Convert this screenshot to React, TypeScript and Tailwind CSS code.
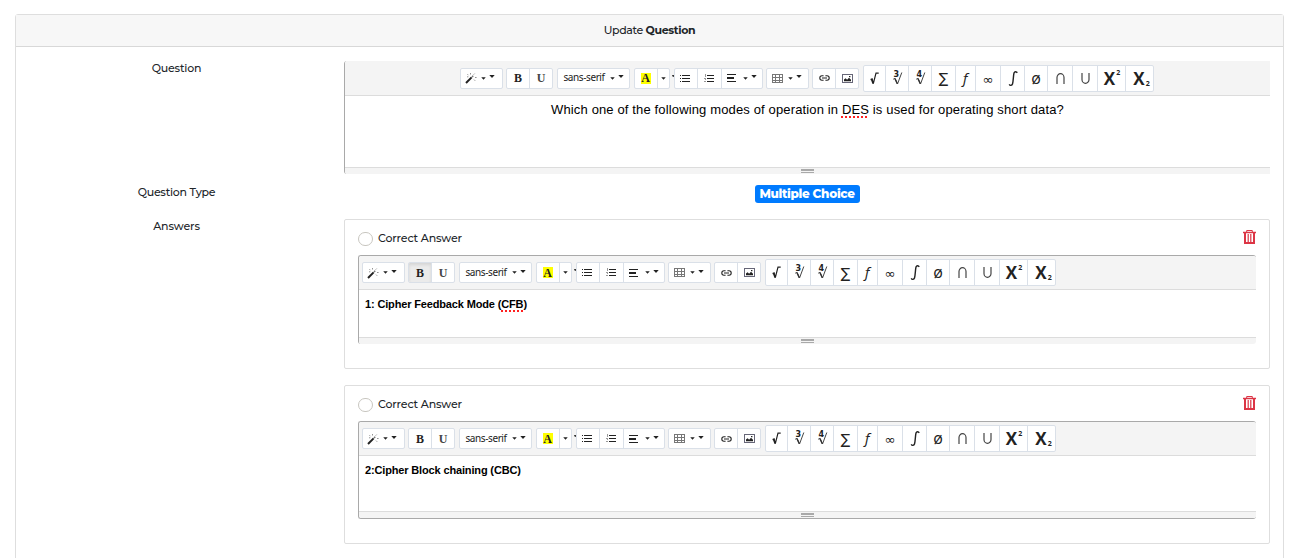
import type { ReactNode } from "react";
import { clsx } from "clsx";

const brand = "font-['Montserrat','Inter',sans-serif]";

function Caret({ className }: { className?: string }) {
  return (
    <svg className={clsx("h-[3px] shrink-0", className)} viewBox="0 0 6 3">
      <path d="M.3 0h5.4L3 3z" fill="#222" />
    </svg>
  );
}

function Carets() {
  return (
    <span className="flex items-center">
      <Caret className="w-[5px]" />
      <Caret className="mb-[3px] ml-[3px] w-[6px]" />
    </span>
  );
}

function Group({ children, className }: { children: ReactNode; className?: string }) {
  return (
    <div className={clsx("flex overflow-hidden rounded-[2px] border border-[#dae0e8] bg-white", className)}>
      {children}
    </div>
  );
}

function Btn({ children, className }: { children: ReactNode; className?: string }) {
  return (
    <button type="button" className={clsx("flex shrink-0 items-center justify-center text-[#222]", className)}>
      {children}
    </button>
  );
}

const divided = "border-l border-[#dae0e8]";

function Wand() {
  return (
    <svg className="h-[12px] w-[12px]" viewBox="0 0 12 12" fill="none">
      <path d="M1 11 6.6 5.4" stroke="#222" strokeWidth="2" />
      <path d="m7 5 1.2-1.2" stroke="#777" strokeWidth="1.6" />
      <path d="M5.5 1v1.5M2.4 2.2l1 1M9.7 1.6l-1 1M10 5.5h1.6M9 7.6l1.2 1.2M2 4.8h1.4" stroke="#888" strokeWidth=".9" />
    </svg>
  );
}

function BulletList() {
  return (
    <svg className="h-[9px] w-[10px]" viewBox="0 0 10 9" shapeRendering="crispEdges" fill="#222">
      <path d="M0 1h1v1H0zM0 4h1v1H0zM0 7h1v1H0zM2 1h8v1H2zM2 4h8v1H2zM2 7h8v1H2z" />
    </svg>
  );
}

function NumberList() {
  return (
    <svg className="h-[9px] w-[10px]" viewBox="0 0 10 9" shapeRendering="crispEdges">
      <path d="M3 1h7v1H3zM3 4h7v1H3zM3 7h7v1H3z" fill="#222" />
      <path d="M1 0h1v3H1zM0 4h2v1H0zM1 5h1v1H1zM0 7h2v1H0z" fill="#999" />
    </svg>
  );
}

function AlignLeft() {
  return (
    <svg className="h-[8px] w-[10px]" viewBox="0 0 10 8" shapeRendering="crispEdges" fill="#222">
      <path d="M0 0h9v1H0zM0 3h7v1H0zM0 4h7v1H0zM0 7h9v1H0z" />
    </svg>
  );
}

function TableIcon() {
  return (
    <svg className="h-[9px] w-[11px]" viewBox="0 0 11 9" shapeRendering="crispEdges" fill="none" stroke="#777">
      <path d="M.5.5h10v8H.5zM3.5 0v9M7.5 0v9M0 3.5h11M0 6.5h11" strokeWidth="1" />
    </svg>
  );
}

function LinkIcon() {
  return (
    <svg className="h-[6px] w-[11px]" viewBox="0 0 11 6" fill="none" stroke="#222" strokeWidth="1.1">
      <path d="M4.6.8H3a2.2 2.2 0 0 0 0 4.4h1.6M6.4.8H8a2.2 2.2 0 0 1 0 4.4H6.4M3 3h5" />
    </svg>
  );
}

function PictureIcon() {
  return (
    <svg className="h-[9px] w-[11px]" viewBox="0 0 11 9">
      <rect x=".5" y=".5" width="10" height="8" fill="none" stroke="#667" />
      <path d="M2 7.3V5.6l1.6-1.4 1.5 1.5L7 3.8l2 2v1.5z" fill="#222" />
      <rect x="7" y="2" width="1.4" height="1.2" fill="#222" />
    </svg>
  );
}

function Root({ index }: { index?: string }) {
  return (
    <svg className="h-[18px] w-[13px]" viewBox="0 0 13 18" fill="none">
      {index ? (
        <>
          <path d="m2.200 10.200 1.800-.8L6.500 15 10.800 3.500" stroke="#444" strokeWidth="1" />
          <path d="m4 9.600 2.300 5.200" stroke="#333" strokeWidth="1.400" />
          <text x="2.6" y="8" fill="#222" fontSize="8" fontFamily="DejaVu Sans, sans-serif" fontWeight="bold">
            {index}
          </text>
        </>
      ) : (
        <>
          <path d="m2.600 10.600 1.500-.7 1.200 4.800L8 4.200h2.700" stroke="#222" strokeWidth="1.200" />
          <path d="m3.700 10.400 1.400 4" stroke="#222" strokeWidth="1.600" />
        </>
      )}
    </svg>
  );
}

function Integral() {
  return (
    <svg className="h-[17px] w-[10px]" viewBox="0 0 10 17" fill="none" stroke="#222">
      <path d="M9.200 2.900C8.600 1.500 6.600 1.200 6 3c-.7 2.300-.6 8.300-1.500 11-.5 1.600-2.500 1.800-3.300.4" strokeWidth="1.400" />
    </svg>
  );
}

function Cup({ flipped = false }: { flipped?: boolean }) {
  return (
    <svg className={clsx("h-[11px] w-[9px]", flipped && "rotate-180")} viewBox="0 0 9 11" fill="none">
      <path d="M1 0v6.500a3.500 3.800 0 0 0 7 0V0" stroke="#444" strokeWidth="1.200" />
    </svg>
  );
}

function Toolbar({ bold = false, centered = false }: { bold?: boolean; centered?: boolean }) {
  return (
    <div
      className={clsx(
        "flex items-center border-b border-[#dcdcdc] bg-[#f4f4f4] font-['Open_Sans',sans-serif]",
        centered ? "h-[35px] justify-center pr-[1px]" : "h-[34px] pl-[3px]",
      )}
    >
      <Group className="h-[21px] w-[43px]">
        <Btn className="w-full gap-[4px] pr-[3px]">
          <Wand />
          <Carets />
        </Btn>
      </Group>
      <Group className="ml-[3px] h-[21px] w-[47px] font-['Liberation_Serif',serif] text-[12px] font-bold">
        <Btn className={clsx("w-[22px]", bold && "bg-[#ebebeb] shadow-[inset_0_2px_3px_#00000018]")}>B</Btn>
        <Btn className={clsx("w-[23px]", divided)}>
          <span className="text-[#444]">U</span>
        </Btn>
      </Group>
      <Group className="ml-[4px] h-[21px] w-[73px]">
        <Btn className="w-full gap-[5px] text-[10px]">
          <span className="pb-[1px] font-['Noto_Sans',sans-serif] tracking-[-0.4px]">sans-serif</span>
          <Carets />
        </Btn>
      </Group>
      <div className="relative ml-[4px]">
        <Group className="h-[21px] w-[36px]">
          <Btn className="w-[22px] pr-[1px]">
            <span className="flex h-[11px] w-[10px] items-center justify-center bg-[#ff0] font-['Liberation_Serif',serif] text-[12px] font-bold">
              A
            </span>
          </Btn>
          <Btn className={clsx("w-[12px] pr-[1px]", divided)}>
            <Caret className="w-[5px]" />
          </Btn>
        </Group>
        <span className="absolute top-[7px] left-[38px] h-[2px] w-[2px] rounded-bl bg-[#333]" />
      </div>
      <Group className="ml-[4px] h-[21px] w-[89px]">
        <Btn className="w-[22px] pr-[2px]">
          <BulletList />
        </Btn>
        <Btn className={clsx("w-[24px] pr-[1px]", divided)}>
          <NumberList />
        </Btn>
        <Btn className={clsx("w-[41px] gap-[6px]", divided)}>
          <AlignLeft />
          <Carets />
        </Btn>
      </Group>
      <Group className="ml-[3px] h-[21px] w-[43px]">
        <Btn className="w-full gap-[5px] pr-[2px]">
          <TableIcon />
          <Carets />
        </Btn>
      </Group>
      <Group className="ml-[3px] h-[21px] w-[47px]">
        <Btn className="w-[22px]">
          <LinkIcon />
        </Btn>
        <Btn className={clsx("w-[23px]", divided)}>
          <PictureIcon />
        </Btn>
      </Group>
      <Group className="ml-[4px] h-[27px] w-[291px] font-['DejaVu_Sans',sans-serif] text-[14px] leading-none">
        <Btn className="w-[21px] pb-[1px]">
          <Root />
        </Btn>
        <Btn className={clsx("w-[23px] pb-[1px]", divided)}>
          <Root index="3" />
        </Btn>
        <Btn className={clsx("w-[23px] pb-[1px]", divided)}>
          <Root index="4" />
        </Btn>
        <Btn className={clsx("w-[24px]", divided)}>∑</Btn>
        <Btn className={clsx("w-[20px] pb-[2px] font-['Open_Sans',sans-serif] text-[15px] italic", divided)}>ƒ</Btn>
        <Btn className={clsx("w-[25px] pt-[2px] text-[13px]", divided)}>∞</Btn>
        <Btn className={clsx("w-[24px]", divided)}>
          <Integral />
        </Btn>
        <Btn className={clsx("w-[23px] pb-[1px] font-['Open_Sans',sans-serif] text-[16px]", divided)}>ø</Btn>
        <Btn className={clsx("w-[25px]", divided)}>
          <Cup flipped />
        </Btn>
        <Btn className={clsx("w-[25px]", divided)}>
          <Cup />
        </Btn>
        <Btn className={clsx("w-[28px] pl-[1px] font-['Open_Sans',sans-serif] text-[17px] font-bold", divided)}>
          X<span className="mb-[11px] ml-[1px] text-[7px]">2</span>
        </Btn>
        <Btn className={clsx("w-[28px] pl-[4px] font-['Open_Sans',sans-serif] text-[17px] font-bold", divided)}>
          X<span className="mt-[10px] ml-[1px] text-[7px]">2</span>
        </Btn>
      </Group>
    </div>
  );
}

function Handle() {
  return (
    <div className="flex h-[7px] justify-center border-t border-[#dcdcdc] bg-[#f4f4f4] pt-[1px]">
      <div className="h-[4px] w-[13px] border-t-2 border-b border-[#a9a9a9]" />
    </div>
  );
}

function Misspelled({ children }: { children: ReactNode }) {
  return (
    <span className="underline decoration-[#ff2020] decoration-dotted decoration-[1.5px] underline-offset-[1.5px]">
      {children}
    </span>
  );
}

function Answer({
  children,
  bold,
  editorClass,
  className,
}: {
  children: ReactNode;
  bold?: boolean;
  editorClass: string;
  className: string;
}) {
  return (
    <section className={clsx("w-[926px] rounded-[2px] border border-[#dedede] px-[13px] pt-[9px]", className)}>
      <div className="flex h-[26px] items-start justify-between">
        <label className="flex items-center">
          <span className="mt-[3px] h-[14px] w-[15px] rounded-full border border-[#c8c6c0]" />
          <span className="ml-[5px] text-[11px] leading-[16px] font-medium tracking-[-0.15px]">Correct Answer</span>
        </label>
        <svg className="h-[16px] w-[13px]" viewBox="0 0 13 16" fill="none" stroke="#dc3545">
          <path d="M3.700 3V1.500h5.600V3" />
          <path d="M0 3.500h13" strokeWidth="1.500" />
          <path d="M2 4v10h9V4" strokeWidth="2" />
          <path d="M5.200 5v9M7.800 5v9" strokeWidth="1.200" />
        </svg>
      </div>
      <div className={clsx("flex flex-col overflow-hidden rounded-[3px] border-t border-l border-[#a9a9a9]", editorClass)}>
        <Toolbar bold={bold} />
        <div className="grow px-[6px] pt-[7px] font-['Liberation_Sans',Arial,sans-serif] text-[11px] leading-[15px] font-bold tracking-[-0.15px] text-black">
          {children}
        </div>
        <Handle />
      </div>
    </section>
  );
}

export default function App() {
  return (
    <div className={clsx("h-[558px] overflow-hidden bg-white pt-[14px] pl-[15px] text-[#212529]", brand)}>
      <main className="h-[600px] w-[1269px] rounded-t-[3px] border border-[#dedede]">
        <header className="flex h-[32px] items-center justify-center border-b border-[#d8d8d8] bg-[#f7f7f7] text-[11px] font-medium tracking-[-0.35px]">
          Update&nbsp;<b className="font-bold">Question</b>
        </header>
        <div className="flex pt-[14px]">
          <div className="-mt-[1px] w-[328px] shrink-0 pr-[7px] text-center text-[11px] leading-[16px] font-medium tracking-[-0.2px]">
            Question
          </div>
          <div className="flex h-[113px] w-[926px] flex-col overflow-hidden rounded-l-[3px] border-l border-[#a9a9a9]">
            <Toolbar centered />
            <div className="grow pt-[5px] text-center font-['Liberation_Sans',Arial,sans-serif] text-[13px] leading-[18px] tracking-[0.14px] text-black">
              Which one of the following modes of operation in <Misspelled>DES</Misspelled> is used for operating short
              data?
            </div>
            <Handle />
          </div>
        </div>
        <div className="flex h-[45px] pt-[10px]">
          <div className="w-[328px] shrink-0 pr-[7px] text-center text-[11px] leading-[16px] font-medium tracking-[-0.25px]">
            Question Type
          </div>
          <div className="flex w-[926px] items-start justify-center">
            <span className="mt-[1px] flex h-[18px] w-[105px] items-center justify-center rounded-[3px] bg-[#007bff] text-[12px] font-extrabold tracking-[-0.3px] whitespace-nowrap text-white">
              Multiple Choice
            </span>
          </div>
        </div>
        <div className="flex">
          <div className="w-[328px] shrink-0 pr-[7px] text-center text-[11px] leading-[14px] font-medium tracking-[-0.1px]">
            Answers
          </div>
          <div>
            <Answer bold className="h-[150px]" editorClass="h-[89px]">
              1: Cipher Feedback Mode (<Misspelled>CFB</Misspelled>)
            </Answer>
            <Answer className="mt-[16px] h-[159px]" editorClass="h-[98px] border-b">
              2:Cipher Block chaining (CBC)
            </Answer>
          </div>
        </div>
      </main>
    </div>
  );
}
